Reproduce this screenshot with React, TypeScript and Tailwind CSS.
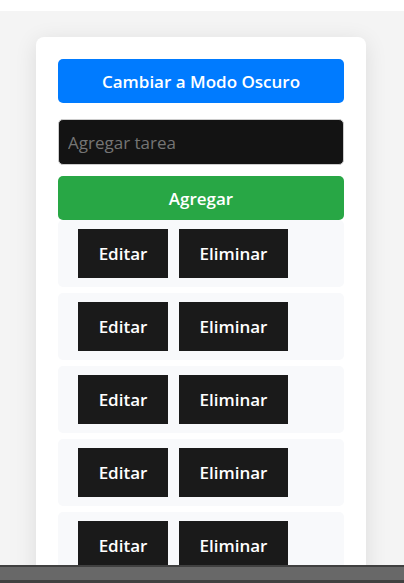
import { useState } from 'react';

type Task = { id: number };

const initialTasks: Task[] = [{ id: 1 }, { id: 2 }, { id: 3 }, { id: 4 }, { id: 5 }];

const wideButton =
  'h-11 w-full rounded-[5px] pt-0.5 text-center text-[17px] font-semibold text-white';
const taskButton =
  'h-[49px] bg-[#1a1a1a] text-center text-[17px] font-semibold text-white';

function TaskRow({ onDelete }: { onDelete: () => void }) {
  return (
    <li className="flex gap-[11px] rounded-[5px] bg-[#f8f9fb] px-5 py-[9px]">
      <button type="button" className={`${taskButton} w-[90px]`}>
        Editar
      </button>
      <button type="button" onClick={onDelete} className={`${taskButton} w-[109px]`}>
        Eliminar
      </button>
    </li>
  );
}

export default function App() {
  const [tasks, setTasks] = useState(initialTasks);
  const [text, setText] = useState('');

  return (
    <div className="flex h-screen flex-col bg-white pt-[11px] font-['Segoe_UI','Open_Sans',sans-serif]">
      <main className="min-h-0 flex-1 overflow-hidden bg-[#f4f4f4] pt-[26px] pr-[38px] pl-9">
        <div className="rounded-lg bg-white p-[22px] shadow-[0_4px_22px_rgba(0,0,0,0.1)]">
          <button type="button" className={`${wideButton} bg-[#007bff]`}>
            Cambiar a Modo Oscuro
          </button>
          <form
            className="mt-4 flex flex-col gap-[11px]"
            onSubmit={(event) => event.preventDefault()}
          >
            <input
              type="text"
              aria-label="Agregar tarea"
              placeholder="Agregar tarea"
              value={text}
              onChange={(event) => setText(event.target.value)}
              className="h-[46px] w-full rounded-[5px] border border-[#cccccc] bg-[#131313] px-[9px] text-[17px] text-white placeholder:text-[#757575]"
            />
            <button type="submit" className={`${wideButton} bg-[#28a745]`}>
              Agregar
            </button>
          </form>
          <ul className="flex flex-col gap-[6px]">
            {tasks.map((task) => (
              <TaskRow
                key={task.id}
                onDelete={() => setTasks(tasks.filter((item) => item.id !== task.id))}
              />
            ))}
          </ul>
        </div>
      </main>
      <footer className="h-[18px] shrink-0 border-t-2 border-b-3 border-[#404040] bg-[#686868]" />
    </div>
  );
}
